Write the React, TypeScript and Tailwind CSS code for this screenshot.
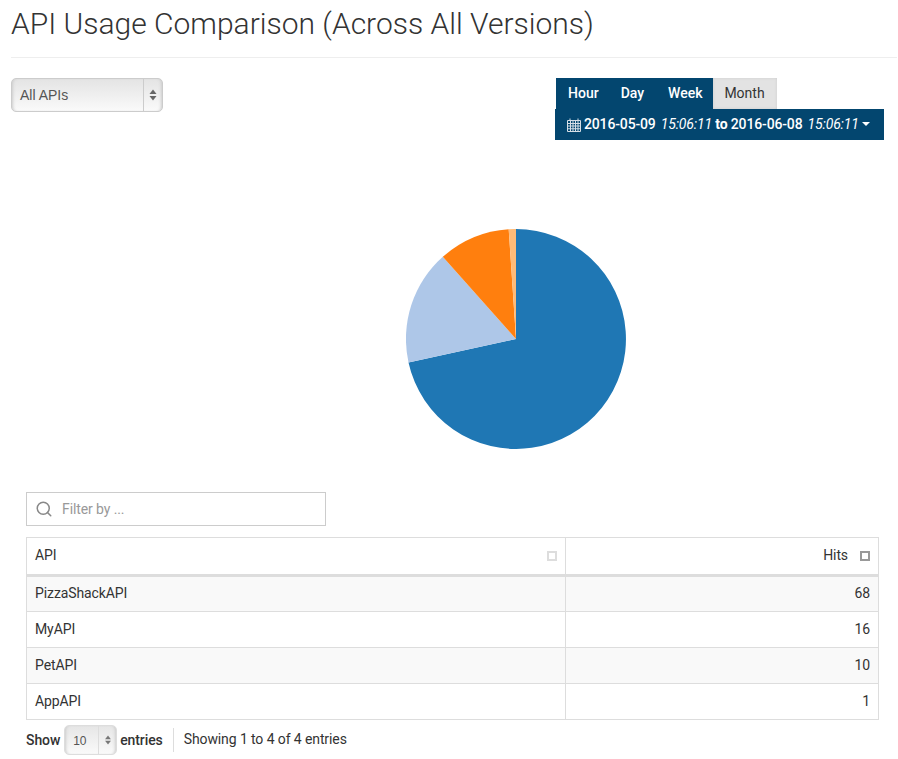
import React from 'react';
import { Search } from 'lucide-react';

const rows = [
  { api: 'PizzaShackAPI', hits: 68 },
  { api: 'MyAPI', hits: 16 },
  { api: 'PetAPI', hits: 10 },
  { api: 'AppAPI', hits: 1 },
];

const Stepper: React.FC<{ small?: boolean }> = ({ small }) => (
  <svg width="8" height={small ? 10 : 12} viewBox="0 0 8 12" fill={small ? '#777' : '#666'}>
    <path d="M4 0.5 L7.5 5 H0.5 Z" />
    <path d="M0.5 7 H7.5 L4 11.5 Z" />
  </svg>
);

const CalendarGrid: React.FC = () => (
  <svg width="14" height="14" viewBox="0 0 14 14" fill="none" stroke="#d5dee6" strokeWidth="1" className="mr-[3px] mt-[2px]">
    <path d="M0.5 2.5 H13.5 V13.5 H0.5 Z" />
    <path d="M0.5 5.5 H13.5 M0.5 8 H13.5 M0.5 10.75 H13.5 M3.5 2.5 V13.5 M6 2.5 V13.5 M8.5 2.5 V13.5 M11 2.5 V13.5" />
    <path d="M3 0.5 V2.5 M11 0.5 V2.5" />
  </svg>
);

const SortBox: React.FC<{ active?: boolean }> = ({ active }) => (
  <span className={`inline-block w-[10px] h-[10px] border-2 ${active ? 'border-[#999]' : 'border-[#ddd]'}`} />
);

export default function App() {
  return (
    <div className="w-[898px] h-[759px] overflow-hidden bg-white text-[#333] font-['Roboto',sans-serif] text-sm tracking-[-0.1px]">
      {/* Header */}
      <div className="ml-[11px] mr-[1px] h-[58px] border-b border-[#eee]">
        <h1 className="text-[30px] leading-[48px] font-light text-[#333] tracking-normal">
          API Usage Comparison (Across All Versions)
        </h1>
      </div>

      {/* Controls */}
      <div className="flex justify-between items-start mt-5 ml-[11px] mr-[14px]">
        <div className="flex w-[152px] h-[34px] rounded-[5px] border border-[#ccc] bg-gradient-to-b from-[#e4e4e4] to-[#fafafa] shadow-[inset_3px_0_3px_-2px_#ccc,inset_-3px_0_3px_-2px_#ccc] font-['Liberation_Sans',sans-serif] tracking-normal text-[#555]">
          <span className="flex-1 px-2 leading-[32px] text-sm">All APIs</span>
          <span className="w-[19px] border-l border-[#ccc] flex items-center justify-center pr-[1px]">
            <Stepper />
          </span>
        </div>

        <div className="flex flex-col items-start w-[329px]">
          <div className="ml-[1px] flex h-[31px] bg-[#03466f] font-medium leading-[30px] text-white tracking-normal">
            <span className="pl-3 pr-[10px]">Hour</span>
            <span className="pl-[12px] pr-[13px]">Day</span>
            <span className="pl-[11px] pr-[10px]">Week</span>
            <span className="w-[64px] text-center font-normal text-[#333] bg-[#e3e3e3] shadow-[inset_0_0_3px_#ccc]">Month</span>
          </div>
          <div className="w-[329px] h-[31px] flex items-center pl-3 pb-[2px] bg-[#03466f] text-white font-medium whitespace-pre tracking-[-0.15px]">
            <CalendarGrid />
            <span>2016-05-09</span>
            <i className="font-normal ml-[5px]">15:06:11</i>
            <span className="font-bold">&nbsp;to&nbsp;</span>
            <span>2016-06-08</span>
            <i className="font-normal ml-[5px]">15:06:11</i>
            <svg width="8" height="4" viewBox="0 0 8 4" fill="#fff" className="ml-[3px]">
              <path d="M0 0 H8 L4 4 Z" />
            </svg>
          </div>
        </div>
      </div>

      {/* Pie */}
      <div className="flex justify-center mt-[89px] ml-[134px]">
        <svg width="220" height="220" viewBox="-110 -110 220 220">
          <path d="M0 0 L0 -110 A110 110 0 1 1 -107.5 23.5 Z" fill="#1f77b4" />
          <path d="M0 0 L-107.5 23.5 A110 110 0 0 1 -73.2 -82.2 Z" fill="#aec7e8" />
          <path d="M0 0 L-73.2 -82.2 A110 110 0 0 1 -7.3 -109.8 Z" fill="#ff7f0e" />
          <path d="M0 0 L-7.3 -109.8 A110 110 0 0 1 0 -110 Z" fill="#ffbb78" />
        </svg>
      </div>

      <div className="ml-[26px] w-[853px]">
        {/* Filter */}
        <div className="mt-[43px] w-[300px] h-[34px] flex items-center border border-[#ccc] pl-[8px]">
          <Search size={18} strokeWidth={2} className="text-[#888]" />
          <span className="ml-[9px] text-[#999]">Filter by ...</span>
        </div>

        {/* Table */}
        <table className="mt-[11px] w-full border-collapse border border-[#ddd] table-fixed">
          <thead>
            <tr className="h-[38px] border-b-[3px] border-[#ddd]">
              <th className="w-[539px] border-r border-[#ddd] pl-2 pr-[8px] font-normal text-left">
                <div className="flex items-center justify-between">
                  <span className="-mt-[2px]">API</span>
                  <SortBox />
                </div>
              </th>
              <th className="pr-2 font-normal text-right">
                <div className="flex items-center justify-end gap-[12px]">
                  <span className="-mt-[2px]">Hits</span>
                  <SortBox active />
                </div>
              </th>
            </tr>
          </thead>
          <tbody>
            {rows.map((row, i) => (
              <tr key={row.api} className={`h-[36px] border-t border-[#ddd] ${i % 2 === 0 ? 'bg-[#f9f9f9]' : 'bg-white'}`}>
                <td className="border-r border-[#ddd] px-2 pb-[2px]">{row.api}</td>
                <td className="px-2 pb-[2px] text-right">{row.hits}</td>
              </tr>
            ))}
          </tbody>
        </table>

        {/* Footer */}
        <div className="flex items-center mt-[5px] h-[30px]">
          <span className="font-medium">Show</span>
          <div className="flex ml-[4px] w-[53px] h-[30px] rounded-[5px] border border-[#ddd] bg-gradient-to-b from-[#e6e6e6] to-[#fafafa] shadow-[inset_3px_0_3px_-2px_#ccc,inset_-3px_0_3px_-2px_#ccc] text-[13px] text-[#555]">
            <span className="flex-1 pl-[8px] leading-[30px] font-['Liberation_Sans',sans-serif] text-xs">10</span>
            <span className="w-[18px] border-l border-[#ddd] flex items-center justify-center">
              <Stepper small />
            </span>
          </div>
          <span className="ml-[3px] font-medium">entries</span>
          <span className="ml-[10px] h-[24px] border-l border-[#ddd]" />
          <span className="ml-[10px] mb-[2px]">Showing 1 to 4 of 4 entries</span>
        </div>
      </div>
    </div>
  );
}
